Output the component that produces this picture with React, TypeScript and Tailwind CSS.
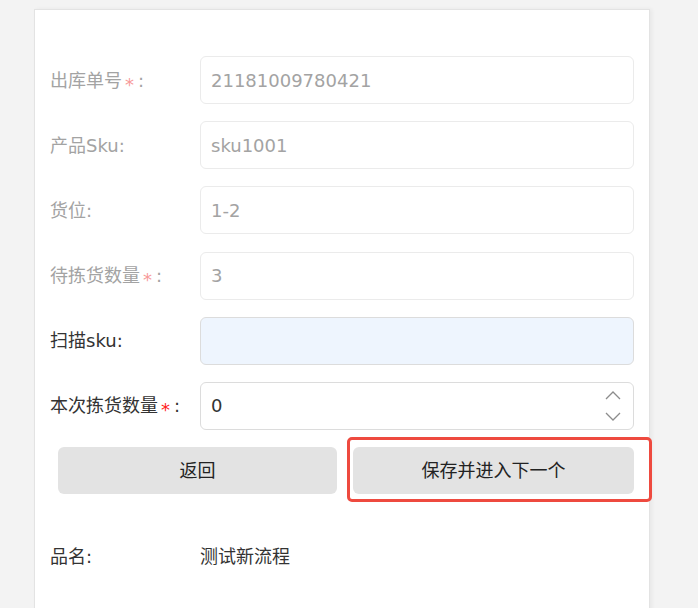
import React from "react";

const font = { fontFamily: '"DejaVu Sans", "Noto Sans CJK SC", sans-serif' };

function Label({ text, req, active }: { text: string; req?: boolean; active?: boolean }) {
  return (
    <div className={`w-[150px] shrink-0 text-[18px] ${active ? "text-[#333]" : "text-[#a3a3a3]"}`}>
      {text}
      {req && (
        <span className={`ml-[3px] mr-[4px] inline-block translate-y-[4px] ${active ? "text-[#ff2020]" : "text-[#f79a9a]"}`}>*</span>
      )}
      <span>:</span>
    </div>
  );
}

function ReadRow({ label, value, req }: { label: string; value: string; req?: boolean }) {
  return (
    <div className="flex items-center">
      <Label text={label} req={req} />
      <div className="flex h-[48px] flex-1 items-center rounded-[6px] border border-[#ebebeb] bg-white pl-[10px] text-[18px] text-[#a3a3a3]">
        {value}
      </div>
    </div>
  );
}

export default function App() {
  return (
    <div className="h-[608px] overflow-hidden bg-[#f3f3f3] pl-[34px] pt-[9px]" style={font}>
      <div className="h-[620px] w-[616px] border border-[#e3e3e3] bg-white pl-[15px] pr-[15px] pt-[46px] shadow-[2px_0_4px_rgba(0,0,0,0.05)]">
        <div className="flex flex-col gap-[17.2px]">
          <ReadRow label="出库单号" value="21181009780421" req />
          <ReadRow label="产品Sku" value="sku1001" />
          <ReadRow label="货位" value="1-2" />
          <ReadRow label="待拣货数量" value="3" req />
          <div className="flex items-center">
            <Label text="扫描sku" active />
            <div className="h-[48px] flex-1 rounded-[6px] border border-[#dcdcdc] bg-[#eef5fe]" />
          </div>
          <div className="flex items-center">
            <Label text="本次拣货数量" req active />
            <div className="flex h-[48px] flex-1 items-center justify-between rounded-[6px] border border-[#dcdcdc] bg-white pl-[10px] pr-[10px] text-[18px] text-[#333]">
              <span>0</span>
              <svg width="20" height="34" viewBox="0 0 20 34" fill="none" stroke="#8c8c8c" strokeWidth="1.3">
                <path d="M3 10 L10 3 L17 10" />
                <path d="M3 24 L10 31 L17 24" />
              </svg>
            </div>
          </div>
          <div className="flex gap-[16px] pl-[8px]">
            <button className="h-[47px] w-[279px] rounded-[6px] bg-[#e3e3e3] text-[18px] text-[#222]">返回</button>
            <div className="relative flex-1">
              <button className="h-[47px] w-full rounded-[6px] bg-[#e3e3e3] text-[18px] text-[#222]">保存并进入下一个</button>
              <div className="pointer-events-none absolute -left-[6px] -right-[18px] -top-[10px] -bottom-[8px] rounded-[5px] border-[3px] border-[#ee4a3f]" />
            </div>
          </div>
        </div>
        <div className="mt-[49px] flex items-center text-[18px] text-[#333]">
          <div className="w-[150px]">品名:</div>
          <div>测试新流程</div>
        </div>
      </div>
    </div>
  );
}
